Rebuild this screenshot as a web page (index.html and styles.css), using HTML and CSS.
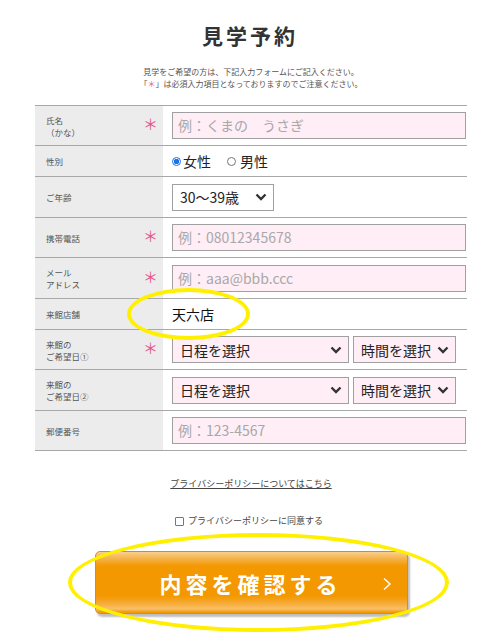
FILE: index.html
```html
<!DOCTYPE html>
<html lang="ja">
<head>
<meta charset="utf-8">
<title>見学予約</title>
<link rel="stylesheet" href="styles.css">
</head>
<body>
<div class="page">
  <h1 class="title">見学予約</h1>
  <p class="intro">見学をご希望の方は、下記入力フォームにご記入ください。<br>「<span class="req-inline">＊</span>」は必須入力項目となっておりますのでご注意ください。</p>

  <div class="form">
    <div class="row h39">
      <div class="label"><span>氏名<br>（かな）</span><span class="req">＊</span></div>
      <div class="value"><div class="input placeholder">例：くまの　うさぎ</div></div>
    </div>
    <div class="row h30">
      <div class="label"><span>性別</span></div>
      <div class="value radios">
        <span class="radio on"></span><span class="rtext">女性</span>
        <span class="radio off"></span><span class="rtext">男性</span>
      </div>
    </div>
    <div class="row h40">
      <div class="label"><span>ご年齢</span></div>
      <div class="value">
        <div class="select age"><span>30〜39歳</span>
          <svg width="12" height="8" viewBox="0 0 12 8"><path d="M1.5 1.5 L6 6 L10.5 1.5" fill="none" stroke="#333" stroke-width="2.4"/></svg>
        </div>
      </div>
    </div>
    <div class="row h39">
      <div class="label"><span>携帯電話</span><span class="req">＊</span></div>
      <div class="value"><div class="input placeholder">例：08012345678</div></div>
    </div>
    <div class="row h40">
      <div class="label"><span>メール<br>アドレス</span><span class="req">＊</span></div>
      <div class="value"><div class="input placeholder">例：aaa@bbb.ccc</div></div>
    </div>
    <div class="row h30">
      <div class="label"><span>来館店舗</span></div>
      <div class="value"><span class="store">天六店</span></div>
    </div>
    <div class="row h39">
      <div class="label"><span>来館の<br>ご希望日①</span><span class="req">＊</span></div>
      <div class="value pair">
        <div class="select pink date"><span>日程を選択</span>
          <svg width="12" height="8" viewBox="0 0 12 8"><path d="M1.5 1.5 L6 6 L10.5 1.5" fill="none" stroke="#333" stroke-width="2.4"/></svg>
        </div>
        <div class="select pink time"><span>時間を選択</span>
          <svg width="12" height="8" viewBox="0 0 12 8"><path d="M1.5 1.5 L6 6 L10.5 1.5" fill="none" stroke="#333" stroke-width="2.4"/></svg>
        </div>
      </div>
    </div>
    <div class="row h40">
      <div class="label"><span>来館の<br>ご希望日②</span></div>
      <div class="value pair">
        <div class="select pink date"><span>日程を選択</span>
          <svg width="12" height="8" viewBox="0 0 12 8"><path d="M1.5 1.5 L6 6 L10.5 1.5" fill="none" stroke="#333" stroke-width="2.4"/></svg>
        </div>
        <div class="select pink time"><span>時間を選択</span>
          <svg width="12" height="8" viewBox="0 0 12 8"><path d="M1.5 1.5 L6 6 L10.5 1.5" fill="none" stroke="#333" stroke-width="2.4"/></svg>
        </div>
      </div>
    </div>
    <div class="row h39">
      <div class="label"><span>郵便番号</span></div>
      <div class="value"><div class="input placeholder">例：123-4567</div></div>
    </div>
  </div>

  <p class="policy"><a href="#">プライバシーポリシーについてはこちら</a></p>
  <p class="agree"><span class="check"></span>プライバシーポリシーに同意する</p>

  <div class="btn-wrap">
    <div class="btn">
      <span class="btn-text">内容を確認する</span>
      <svg class="btn-arrow" width="10" height="14" viewBox="0 0 10 14"><path d="M2 1.5 L8 7 L2 12.5" fill="none" stroke="#fff" stroke-width="1.4"/></svg>
    </div>
  </div>

  <div class="mark mark-store"></div>
  <div class="mark mark-btn"></div>
</div>
</body>
</html>
```

FILE: styles.css
```css
* { box-sizing: border-box; }
html, body { margin: 0; padding: 0; background: #fff; }
body {
  font-family: "Noto Sans CJK JP", "Noto Sans", sans-serif;
  color: #333;
}
.page {
  position: relative;
  width: 500px;
  height: 643px;
  padding: 23px 33px 0 35px;
}
.title {
  margin: 0;
  text-align: center;
  font-size: 21px;
  line-height: 24px;
  font-weight: 700;
  letter-spacing: 3px;
  color: #333;
  padding-right: 2px;
}
.intro {
  margin: 19px 0 15px;
  text-align: center;
  font-size: 8px;
  line-height: 12px;
  color: #555;
}
.req-inline { color: #e8588c; }

.form {
  border-top: 1px solid #a8a8a8;
}
.row {
  display: grid;
  grid-template-columns: 128px 1fr;
  border-bottom: 1px solid #a8a8a8;
}
.h39 { height: 40px; }
.h40 { height: 41px; }
.h30 { height: 31px; }
.label {
  background: #ececec;
  display: flex;
  align-items: center;
  justify-content: space-between;
  padding: 0 5px 0 11px;
  font-size: 8.5px;
  line-height: 12px;
  color: #555;
}
.req {
  color: #e8588c;
  font-size: 15px;
  line-height: 15px;
  margin-top: -4px;
}
.value {
  display: flex;
  align-items: center;
  padding: 0 0 0 9px;
}
.input {
  width: 294px;
  height: 27px;
  border: 1px solid #a0a0a0;
  background: #ffeef6;
  font-size: 14px;
  line-height: 25px;
  padding-left: 5px;
}
.placeholder { color: #a8a8a8; }
.radios { font-size: 14px; color: #222; }
.radio {
  width: 9px;
  height: 9px;
  border-radius: 50%;
  display: inline-block;
  margin-right: 2px;
}
.radio.on {
  border: 1px solid #1a73e8;
  background: radial-gradient(circle, #1a73e8 0 2.5px, #fff 3px);
}
.radio.off {
  border: 1px solid #767676;
  background: #fff;
  margin-left: 16px;
  margin-right: 4px;
}
.rtext { line-height: 20px; }
.select {
  height: 27px;
  border: 1px solid #a0a0a0;
  background: #fff;
  display: flex;
  align-items: center;
  justify-content: space-between;
  font-size: 14px;
  color: #222;
  padding: 0 6px 0 7px;
}
.select svg { display: block; }
.select.age { width: 102px; }
.select.pink { background: #ffeef6; }
.pair { gap: 4px; }
.select.date { width: 177px; }
.select.time { width: 103px; padding-left: 7px; }
.store { font-size: 14px; color: #111; }

.policy {
  margin: 26px 0 0;
  text-align: center;
  font-size: 9px;
  line-height: 14px;
}
.policy a { color: #444; text-decoration: underline; }
.agree {
  margin: 23px 0 0;
  text-align: center;
  font-size: 9px;
  line-height: 14px;
  color: #444;
  display: flex;
  justify-content: center;
  align-items: center;
  padding-right: 4px;
}
.check {
  width: 9px;
  height: 9px;
  border: 1px solid #777;
  border-radius: 1px;
  display: inline-block;
  margin-right: 4px;
}
.btn-wrap {
  display: flex;
  justify-content: center;
  margin-top: 23px;
  padding-left: 26px;
}
.btn {
  position: relative;
  width: 313px;
  height: 63px;
  margin-left: -25px;
  border-radius: 5px;
  border: 1px solid #e58b00;
  background: linear-gradient(to bottom,
    #f9d08f 0px, #f6b95a 5px, #f39800 14px, #f39800 44px,
    #f6ad3c 52px, #f8c06a 57px, #f39a08 60px, #f39800 63px);
  box-shadow: 2px 3px 2px rgba(0,0,0,0.25);
  display: flex;
  align-items: center;
  justify-content: center;
}
.btn-text {
  color: #fff;
  font-size: 22px;
  font-weight: 700;
  letter-spacing: 4px;
  margin-left: -2px;
}
.btn-arrow {
  position: absolute;
  right: 15px;
  top: 25px;
}
.mark {
  position: absolute;
  border: 4px solid #fff000;
  border-radius: 50%;
  pointer-events: none;
}
.mark-store {
  left: 127px;
  top: 288px;
  width: 123px;
  height: 52px;
}
.mark-btn {
  left: 68px;
  top: 533px;
  width: 381px;
  height: 99px;
}
```
